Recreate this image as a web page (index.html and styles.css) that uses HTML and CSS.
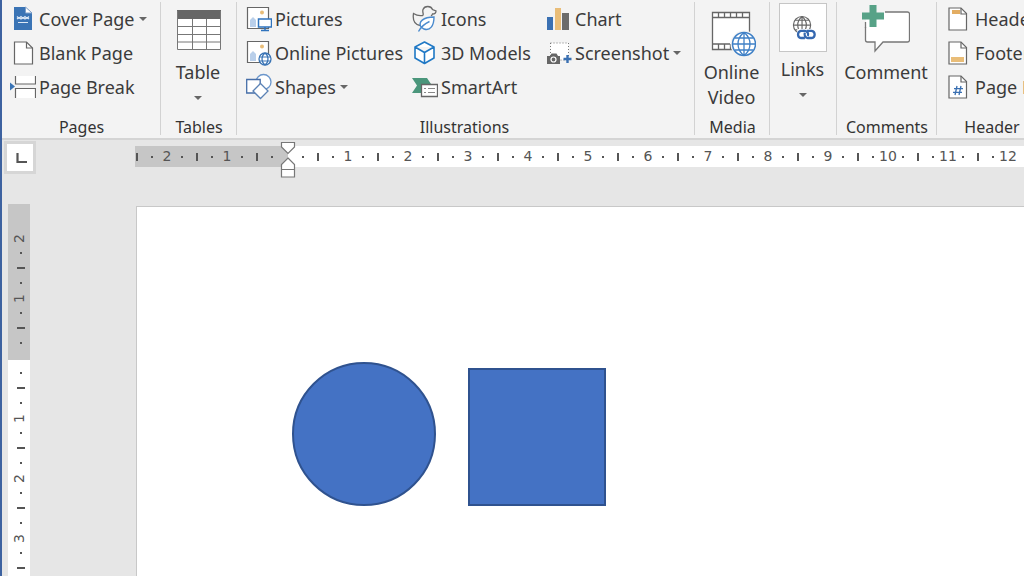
FILE: index.html
```html
<!DOCTYPE html>
<html lang="en">
<head>
<meta charset="utf-8">
<title>Document editor</title>
<link rel="stylesheet" href="styles.css">
</head>
<body>
<header class="ribbon">
  <section class="group pages">
    <div class="rows">
      <button class="cmd"><svg class="ico" viewBox="0 0 26 28"><path d="M4 2h11l7 6v17H4z" fill="#3a74b5"/><path d="M15.500 2v6H22z" fill="#fff" stroke="#7f9fc8"/><path d="M7 11.500l2 2 2-2 2 2 2-2 2 2 2-2M7 14l2-1.500 2 1.500 2-1.500 2 1.500 2-1.500 2 1.500M8 17.500h10" fill="none" stroke="#dce8f5" stroke-width="1.200"/></svg>Cover Page<span class="caret"></span></button>
      <button class="cmd"><svg class="ico" viewBox="0 0 26 28"><path d="M4.500 3h12l6 6v16h-18z" fill="#fff" stroke="#666" stroke-width="1.200"/><path d="M16.500 3v6h6" fill="none" stroke="#666" stroke-width="1.200"/></svg>Blank Page</button>
      <button class="cmd"><svg class="ico" viewBox="0 0 26 28"><path d="M6 3h19v8H6zM6 16h19v9H6z" fill="#fff"/><path d="M5.500 3v8h20V3M5.500 25v-9.500h20V25" fill="none" stroke="#666" stroke-width="1.200"/><path d="M0 9.500L5 13.500 0 17.500z" fill="#3a74b5"/></svg>Page Break</button>
    </div>
    <h2 class="label">Pages</h2>
  </section>

  <section class="group tables">
    <button class="big"><svg class="bigico" viewBox="0 0 48 52"><path d="M4 6h42v38H4z" fill="#fff"/><path d="M3 5h44v9H3z" fill="#666"/><path d="M3.500 6v38.500h43V6M18.500 14v30M32.500 14v30M4 21.500h42M4 29.500h42M4 37h42" fill="none" stroke="#777"/></svg><span>Table</span><span class="caret"></span></button>
    <h2 class="label">Tables</h2>
  </section>

  <section class="group illustrations">
    <div class="columns">
      <div class="rows">
        <button class="cmd"><svg class="ico" viewBox="0 0 26 28"><path d="M1.500 2.500h21v21h-21z" fill="#fff" stroke="#666" stroke-width="1.200"/><circle cx="16" cy="7.500" r="2" fill="#e9bd78"/><path d="M4 22v-7l3-3 3 3v7z" fill="#b9cfea"/><path d="M12.500 14h13v8h-13z" fill="#fff" stroke="#2f73bd" stroke-width="1.500"/><path d="M19 22v3M15 25.500h8" stroke="#2f73bd" stroke-width="1.500"/></svg>Pictures</button>
        <button class="cmd"><svg class="ico" viewBox="0 0 26 28"><path d="M1.500 2.500h21v21h-21z" fill="#fff" stroke="#666" stroke-width="1.200"/><circle cx="16" cy="7.500" r="2" fill="#e9bd78"/><path d="M4 22v-7l3-3 3 3v7z" fill="#b9cfea"/><circle cx="19" cy="20" r="6" fill="#fff" stroke="#3a74b5" stroke-width="1.300"/><path d="M13.500 18h11M13.500 22h11M19 14c-4 3-4 9 0 12M19 14c4 3 4 9 0 12" fill="none" stroke="#3a74b5" stroke-width="1.200"/></svg>Online Pictures</button>
        <button class="cmd"><svg class="ico" viewBox="0 0 26 28"><circle cx="17.500" cy="9" r="7.500" fill="#fff" stroke="#6b96cb" stroke-width="1.300"/><path d="M.7 6.500h13.500v13.500H.7z" fill="#fff" stroke="#466ea8" stroke-width="1.300"/><path d="M14.500 10.500l7.500 7.500-7.500 7.500L7 18z" fill="#fff" stroke="#5b82b5" stroke-width="1.300"/></svg>Shapes<span class="caret"></span></button>
      </div>
      <div class="rows">
        <button class="cmd"><svg class="ico" viewBox="0 0 26 28"><path d="M8 20.500C3 19.500.5 15 1.500 8.500c3 2 6 2.500 9 2C12.500 10 10 7.500 11 4.500c1.500-4 8-4 9.500 0l3.500 1.500c0 2-1.500 3-3.500 3-.3 1-.8 1.500-1.500 2" fill="none" stroke="#6a6a6a" stroke-width="1.300"/><path d="M9 22c-3-5 2-10 13-10 0 9-4 14-10 12zM6.500 26.500C9 22 13 18.500 17.500 16.500" fill="#fff" stroke="#4b8bce" stroke-width="1.400"/></svg>Icons</button>
        <button class="cmd"><svg class="ico" viewBox="0 0 26 28"><path d="M12.500 3l9.500 5v11l-9.500 5.500L3 19V8zM3 8l9.500 5.500L22 8M12.500 13.500v11" fill="#fff" stroke="#1f78c5" stroke-width="1.600" stroke-linejoin="round"/></svg>3D Models</button>
        <button class="cmd"><svg class="ico" viewBox="0 0 26 28"><path d="M0 5h15l4 6H9v9H0l5-7.500z" fill="#4a967b"/><path d="M9.500 11.500h16v12h-16z" fill="#fff" stroke="#666" stroke-width="1.300"/><path d="M12 15.500h2m2 0h7M12 19.500h2m2 0h7" stroke="#888" stroke-width="1.200"/></svg>SmartArt</button>
      </div>
      <div class="rows">
        <button class="cmd"><svg class="ico" viewBox="0 0 26 28"><path d="M1 12h6v13H1z" fill="#3a70b2"/><path d="M9 3h6v22H9z" fill="#e9bd78"/><path d="M16 8h7v17h-7z" fill="#6b6b6b"/></svg>Chart</button>
        <button class="cmd"><svg class="ico" viewBox="0 0 26 28"><path d="M4.500 4h18v17h-18z" fill="#fff" stroke="#777" stroke-dasharray="1 2"/><path d="M1 17h3l1.500-2.500h5L12 17h2v8H1z" fill="#666"/><circle cx="7.500" cy="20.500" r="2.500" fill="none" stroke="#fff" stroke-width="1.200"/><path d="M21.500 16v8M17.500 20h8" stroke="#3a70b2" stroke-width="2.400"/></svg>Screenshot<span class="caret"></span></button>
      </div>
    </div>
    <h2 class="label">Illustrations</h2>
  </section>

  <section class="group media">
    <button class="big"><svg class="bigico" viewBox="0 0 48 52"><path d="M5 8h36v36H5z" fill="#fff"/><path d="M41.500 27V7.500h-37v37H25M4.500 12.500h37M4.500 39H22M10.500 8v4.500M16.500 8v4.500M22.500 8v4.500M28.500 8v4.500M34.500 8v4.500M10.500 39v5.500M16.500 39v5.500M22.500 39v5.500" fill="none" stroke="#666" stroke-width="1.300"/><circle cx="36" cy="39" r="13.500" fill="#f3f3f3"/><circle cx="36" cy="39" r="11.500" fill="#fff" stroke="#3f80c6" stroke-width="1.500"/><path d="M36 27.500v23M24.500 39h23M27 33h18M27 45h18M36 27.500c-8 6-8 17 0 23M36 27.500c8 6 8 17 0 23" fill="none" stroke="#3f80c6" stroke-width="1.300"/></svg><span>Online<br>Video</span></button>
    <h2 class="label">Media</h2>
  </section>

  <section class="group links">
    <button class="big"><span class="tile"><svg viewBox="0 0 48 48"><g fill="none" stroke="#666" stroke-width="1.200"><circle cx="23" cy="22" r="9"/><path d="M23 13v18M14 22h18M16 17h14M16 27h14M23 13c-6 5-6 13 0 18M23 13c6 5 6 13 0 18"/></g><path d="M18 26h20v12H18z" fill="#fff"/><g fill="none" stroke="#3568b0" stroke-width="2.400"><path d="M26 35.500h-4a3.800 3.800 0 0 1 0-7.500h4a3.800 3.800 0 0 1 3 5.500"/><path d="M28 28h5a3.800 3.800 0 0 1 0 7.500h-4a3.800 3.800 0 0 1-3-5.500"/></g></svg></span><span>Links</span><span class="caret"></span></button>
  </section>

  <section class="group comments">
    <button class="big"><svg class="bigico" viewBox="0 0 48 52"><path d="M3.500 9c0-1 1-2 2-2h40c1 0 2 1 2 2v26c0 1-1 2-2 2H21l-8 9v-9H5.500c-1 0-2-1-2-2z" fill="#fff" stroke="#777" stroke-width="1.300"/><path d="M0 0h23v22H0z" fill="#f3f3f3"/><path d="M4 14h16V8h3v14H4z" fill="#fff"/><path d="M3.500 17v6" stroke="#777" stroke-width="1.300"/><path d="M11 0v22M0 11h22" stroke="#57a287" stroke-width="7"/></svg><span>Comment</span></button>
    <h2 class="label">Comments</h2>
  </section>

  <section class="group header-footer">
    <div class="rows">
      <button class="cmd"><svg class="ico" viewBox="0 0 26 28"><path d="M3 3h12l5.500 5.500V25H3z" fill="#fff" stroke="#666" stroke-width="1.200"/><path d="M15 3v6h6" fill="none" stroke="#666" stroke-width="1.200"/><path d="M6 5h8v4H6z" fill="#e3ad62"/></svg>Header<span class="caret"></span></button>
      <button class="cmd"><svg class="ico" viewBox="0 0 26 28"><path d="M3 3h12l5.500 5.500V25H3z" fill="#fff" stroke="#666" stroke-width="1.200"/><path d="M15 3v6h6" fill="none" stroke="#666" stroke-width="1.200"/><path d="M5 18h13v5H5z" fill="#e9bd78"/></svg>Footer<span class="caret"></span></button>
      <button class="cmd"><svg class="ico" viewBox="0 0 26 28"><path d="M3 3h12l5.500 5.500V25H3z" fill="#fff" stroke="#666" stroke-width="1.200"/><path d="M15 3v6h6" fill="none" stroke="#666" stroke-width="1.200"/><path d="M11 13l-2 9M15 13l-2 9M8 15.700h9M7 19.300h9" stroke="#3a70b2" stroke-width="1.300"/></svg>Page Number<span class="caret"></span></button>
    </div>
    <h2 class="label">Header &amp; Footer</h2>
  </section>
</header>

<main class="workspace">
  <div class="ruler-bar">
    <button class="tab-stop" aria-label="Tab stop"><svg viewBox="0 0 26 28"><path d="M10.500 9v9H20" fill="none" stroke="#555" stroke-width="2.200"/></svg></button>
    <div class="ruler">
      <div class="margin-part"><span class="unit"></span><span class="unit">2</span><span class="unit">1</span></div>
      <div class="text-part">
        <svg class="indent" viewBox="0 0 16 38"><path d="M1.500 1.500h13v4.500L8 12.500 1.500 6zM8 17l6.500 6.500v12.500h-13V23.500zM1.500 28.500h13" fill="#fff" stroke="#777" stroke-width="1.200"/></svg>
        <span class="unit">1</span><span class="unit">2</span><span class="unit">3</span><span class="unit">4</span><span class="unit">5</span><span class="unit">6</span><span class="unit">7</span><span class="unit">8</span><span class="unit">9</span><span class="unit">10</span><span class="unit">11</span><span class="unit">12</span>
      </div>
    </div>
  </div>
  <div class="editor">
    <div class="ruler vertical">
      <div class="margin-part"><span class="unit"><b>2</b></span><span class="unit"><b>1</b></span></div>
      <div class="text-part"><span class="unit"><b>1</b></span><span class="unit"><b>2</b></span><span class="unit"><b>3</b></span><span class="unit"></span></div>
    </div>
    <article class="paper">
      <svg class="circle" viewBox="0 0 144 144"><circle cx="72" cy="72" r="71" fill="#4472c4" stroke="#2f528f" stroke-width="2"/></svg>
      <svg class="square" viewBox="0 0 138 138"><path d="M1 1h136v136H1z" fill="#4472c4" stroke="#2f528f" stroke-width="2"/></svg>
    </article>
  </div>
</main>
</body>
</html>
```
FILE: styles.css
```css
* { box-sizing: border-box; }

body {
  margin: 0;
  height: 100vh;
  overflow: hidden;
  display: flex;
  flex-direction: column;
  border-left: 2px solid #3d62a0;
  background: #e6e6e6;
  color: #3b3b3b;
  font-family: "Noto Sans", "Open Sans", sans-serif;
  font-size: 18px;
}

button {
  border: 0;
  padding: 0;
  background: none;
  color: inherit;
  font: inherit;
  white-space: nowrap;
}

.ribbon {
  display: flex;
  flex: none;
  overflow: hidden;
  padding-top: 2px;
  background: #f3f3f3;
  border-bottom: 2px solid #d4d4d4;
}

.group {
  display: flex;
  flex-direction: column;
  flex: none;
  position: relative;
}

.group::after {
  content: "";
  position: absolute;
  top: 0;
  right: 0;
  bottom: 3px;
  width: 1px;
  background: #d2d2d2;
}

.pages { width: 159px; padding-left: 8px; }
.pages .label { padding-right: 8px; }
.tables { width: 76px; }
.illustrations { width: 458px; padding-left: 9px; }
.illustrations .label { padding-right: 12px; }
.media { width: 75px; }
.links { width: 67px; }
.comments { width: 100px; }
.header-footer { flex: 1 0 170px; padding-left: 9px; }

.rows {
  display: flex;
  flex-direction: column;
  align-items: flex-start;
}

.columns {
  display: grid;
  grid-template-columns: 166px 134px auto;
}

.cmd {
  display: flex;
  align-items: center;
  height: 34px;
}

.ico {
  width: 26px;
  height: 28px;
  margin-right: 3px;
}

.caret {
  width: 0;
  border: 4px solid transparent;
  border-top-color: #666;
  border-bottom: 0;
  margin-left: 4px;
}

.label {
  margin: auto 0 0;
  font-size: 16px;
  font-weight: 400;
  line-height: 22px;
  text-align: center;
  color: #333;
}

.big {
  display: flex;
  flex-direction: column;
  align-items: center;
  height: 114px;
  padding: 3px 2px 0 0;
  line-height: 25px;
}

.bigico {
  width: 48px;
  height: 52px;
  margin-bottom: 3px;
}

.big .caret { margin: 11px 0 0; }

.links .big { padding-top: 1px; }

.tile {
  width: 48px;
  height: 49px;
  margin-bottom: 5px;
  background: #fff;
  border: 1px solid #c6c6c6;
}

.tile svg { display: block; }

.workspace {
  display: flex;
  flex-direction: column;
  flex: 1;
  min-height: 0;
}

.ruler-bar {
  display: flex;
  align-items: flex-start;
  flex: none;
  height: 64px;
  padding: 1px 0 0 2px;
}

.tab-stop {
  width: 32px;
  height: 33px;
  margin-right: 99px;
  background: #fff;
  border: 3px solid #d6d6d6;
}

.tab-stop svg { display: block; }

.ruler {
  display: flex;
  flex: 1;
  min-width: 0;
  margin-top: 5px;
  font-family: "DejaVu Sans", sans-serif;
  font-size: 14px;
  line-height: 21px;
  color: #555;
}

.margin-part,
.text-part {
  display: flex;
  overflow: hidden;
  background: #c6c6c6;
}

.margin-part {
  flex: none;
  justify-content: flex-end;
  width: 153px;
  padding-right: 8px;
}

.text-part {
  position: relative;
  flex: 1;
  overflow: visible;
  padding-left: 8px;
  background: #fff;
}

.unit {
  flex: none;
  width: 60px;
  height: 21px;
  padding-left: 44px;
  display: flex;
  justify-content: center;
  background:
    linear-gradient(#555, #555) 6px 10px / 2px 2px no-repeat,
    linear-gradient(#555, #555) 21px 7px / 2px 8px no-repeat,
    linear-gradient(#555, #555) 36px 10px / 2px 2px no-repeat;
}

.margin-part .unit {
  padding: 0 46px 0 0;
  background-position: 21px 10px, 36px 7px, 51px 10px;
}

.indent {
  position: absolute;
  left: -8px;
  top: -5px;
  width: 16px;
  height: 38px;
}

.editor {
  display: flex;
  flex: 1;
  min-height: 0;
}

.vertical {
  flex: none;
  flex-direction: column;
  width: 22px;
  margin: 0 106px 0 6px;
}

.vertical .margin-part {
  flex-direction: column;
  width: auto;
  height: 156px;
  padding: 0 0 9px;
}

.vertical .text-part {
  flex-direction: column;
  overflow: hidden;
  padding: 6px 0 0;
}

.vertical .unit {
  width: auto;
  height: 60px;
  padding: 45px 0 0;
  align-items: center;
  background-position: 12px 6px, 9px 21px, 12px 36px;
  background-size: 2px 2px, 8px 2px, 2px 2px;
}

.vertical .margin-part .unit {
  padding: 0 0 45px;
  background-position: 12px 21px, 9px 36px, 12px 51px;
}

.vertical b {
  font-weight: 400;
  writing-mode: vertical-rl;
  transform: rotate(180deg);
}

.paper {
  display: flex;
  flex: 1;
  align-items: flex-end;
  align-self: stretch;
  gap: 32px;
  min-width: 0;
  margin-top: 2px;
  padding: 0 0 70px 155px;
  background: #fff;
  border: 1px solid #c8c8c8;
  border-width: 1px 0 0 1px;
}

.circle { width: 144px; height: 144px; }
.square { width: 138px; height: 138px; }
```
